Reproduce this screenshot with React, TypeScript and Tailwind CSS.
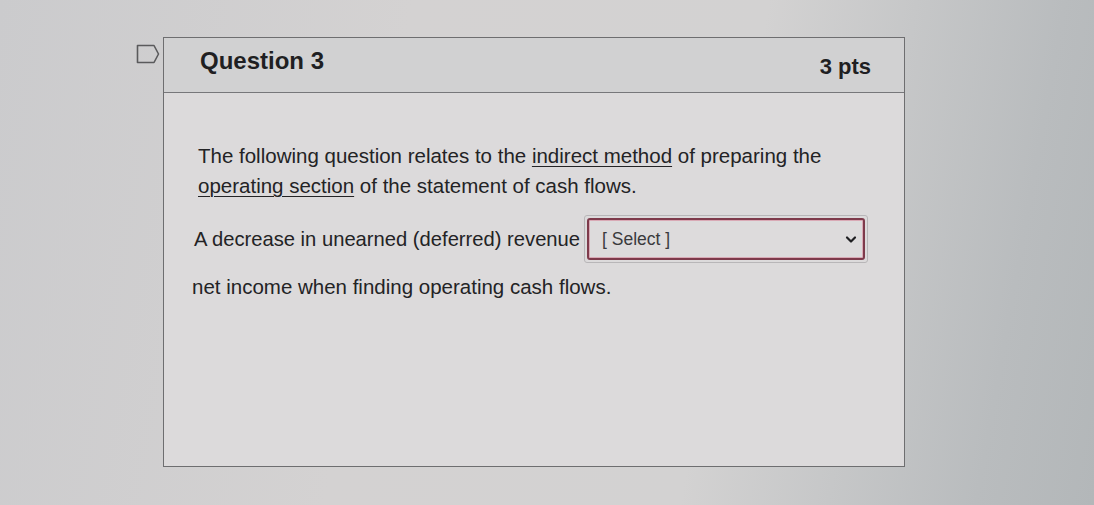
import React from "react";

export default function App() {
  return (
    <div
      className="w-[1094px] h-[505px] overflow-hidden bg-[linear-gradient(100deg,#cbcbcd_0%,#d4d2d2_35%,#d3d2d2_65%,#b9bcbe_90%,#b3b7b9_100%)]"
      style={{ fontFamily: '"Liberation Sans", Arial, sans-serif' }}
    >
      <div className="flex items-start pt-[37px] pl-[136px]">
        <div className="mt-[7px] w-[27px] shrink-0">
          <svg width="25" height="20" viewBox="0 0 25 20">
            <path d="M1.5 1.5 H18 L22.5 10 L18 18.5 H1.5 Z" fill="none" stroke="#5a5a5c" strokeWidth="1.6" strokeLinejoin="round" />
          </svg>
        </div>
        <div className="w-[742px] h-[430px] border border-[#6e6e70] bg-[#dcdadb] flex flex-col">
          <div className="h-[55px] shrink-0 bg-[#d1d1d2] border-b border-[#77777a] flex items-center justify-between pl-[36px] pr-[33px]">
            <span className="text-[24px] font-bold text-[#1f1f22] leading-none -mt-[9px]">Question 3</span>
            <span className="text-[22px] font-bold text-[#1f1f22] leading-none mt-[4px]">3 pts</span>
          </div>
          <div className="pt-[48px] pl-[33px] text-[20.5px] text-[#232325] leading-[30px]">
            <p className="pl-[1px]">
              The following question relates to the{" "}
              <span className="underline underline-offset-[3px] decoration-1">indirect method</span> of preparing the
            </p>
            <p className="pl-[1px]">
              <span className="underline underline-offset-[3px] decoration-1">operating section</span> of the statement of cash flows.
            </p>
            <div className="mt-[14px] flex items-center -ml-[3px]">
              <span className="text-[20.2px]">A decrease in unearned (deferred) revenue</span>
              <div className="ml-[4px] p-[2px] border border-[#b8b6b8] rounded-[3px]">
                <div className="w-[278px] h-[42px] rounded-[3px] border-2 border-[#7e3a4b] shadow-[inset_0_0_0_1px_#d9a9b5] bg-[#dddbdc] flex items-center justify-between pl-[13px] pr-[6px]">
                  <span className="text-[17.5px] text-[#3a3a3d]">[ Select ]</span>
                  <svg width="12" height="9" viewBox="0 0 12 9">
                    <path d="M2 2.5 L6 6.5 L10 2.5" fill="none" stroke="#1f1f22" strokeWidth="2.2" strokeLinecap="round" strokeLinejoin="round" />
                  </svg>
                </div>
              </div>
            </div>
            <p className="mt-[9px] -ml-[5px]">net income when finding operating cash flows.</p>
          </div>
        </div>
      </div>
    </div>
  );
}
